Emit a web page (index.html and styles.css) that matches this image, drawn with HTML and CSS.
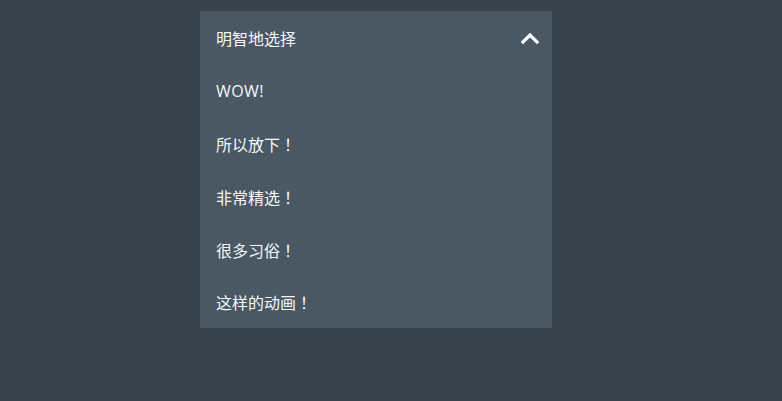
FILE: index.html
```html
<!DOCTYPE html>
<html lang="zh-CN">
<head>
<meta charset="utf-8">
<link rel="stylesheet" href="styles.css">
</head>
<body>
<div class="dropdown">
  <div class="head">
    <span>明智地选择</span>
    <svg class="chev" width="18" height="12" viewBox="0 0 18 12"><path d="M2 10 L9 3 L16 10" fill="none" stroke="#ffffff" stroke-width="3.2" stroke-linecap="square"/></svg>
  </div>
  <div class="item latin">WOW!</div>
  <div class="item">所以放下<span class="bang">！</span></div>
  <div class="item">非常精选<span class="bang">！</span></div>
  <div class="item">很多习俗<span class="bang">！</span></div>
  <div class="item">这样的动画<span class="bang">！</span></div>
</div>
</body>
</html>
```
FILE: styles.css
```css
html, body {
  margin: 0;
  padding: 0;
  background: #37424b;
  height: 100%;
}
body {
  font-family: "Open Sans", "Noto Sans CJK SC", sans-serif;
  font-size: 16px;
  color: #f6f7f8;
  padding-top: 11px;
}
.dropdown {
  margin-left: 200px;
  width: 352px;
  background: #4a5863;
}
.head {
  height: 53px;
  padding: 0 13px 0 16px;
  display: flex;
  align-items: center;
  justify-content: space-between;
}
.item {
  height: 53px;
  padding: 0 16px;
  display: flex;
  align-items: center;
}
.item:last-child {
  height: 52px;
}
.latin {
  font-weight: 500;
  letter-spacing: 0.4px;
}
.bang {
  font-family: "Noto Sans CJK TC", sans-serif;
}
.chev {
  display: block;
}
```
